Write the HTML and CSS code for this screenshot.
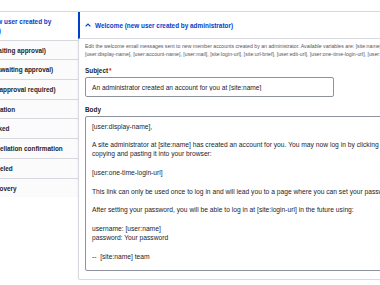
FILE: index.html
```html
<!DOCTYPE html>
<html lang="en">
<head>
    <meta charset="UTF-8">
    <meta name="viewport" content="width=device-width, initial-scale=1.0">
    <title>Account settings - Emails</title>
    <link rel="stylesheet" href="styles.css">
</head>
<body>
    <div class="vertical-tabs">
        <ul class="tabs-menu">
            <li class="tabs-item is-selected">Welcome (new user created by administrator)</li>
            <li class="tabs-item">Welcome (awaiting approval)</li>
            <li class="tabs-item">Admin (user awaiting approval)</li>
            <li class="tabs-item">Welcome (no approval required)</li>
            <li class="tabs-item">Account activation</li>
            <li class="tabs-item">Account blocked</li>
            <li class="tabs-item">Account cancellation confirmation</li>
            <li class="tabs-item">Account canceled</li>
            <li class="tabs-item">Password recovery</li>
        </ul>

        <div class="tabs-pane">
            <div class="pane-summary">
                <svg class="chevron" width="6" height="4" viewBox="0 0 6 4">
                    <polyline points="0.6,3.4 3,1 5.4,3.4" fill="none" stroke="#003ecc" stroke-width="1.2"/>
                </svg>
                <span>Welcome (new user created by administrator)</span>
            </div>

            <div class="pane-body">
                <div class="description">
                    Edit the welcome email messages sent to new member accounts created by an administrator. Available variables are: [site:name], [site:url],<br>
                    [user:display-name], [user:account-name], [user:mail], [site:login-url], [site:url-brief], [user:edit-url], [user:one-time-login-url], [user:cancel-url].
                </div>

                <div class="form-item">
                    <label for="subject">Subject<span class="required">*</span></label>
                    <input type="text" id="subject" class="form-text" value="An administrator created an account for you at [site:name]">
                </div>

                <div class="form-item">
                    <label for="body">Body</label>
                    <textarea id="body" class="form-textarea" wrap="off">[user:display-name],

A site administrator at [site:name] has created an account for you. You may now log in by clicking this link or
copying and pasting it into your browser:

[user:one-time-login-url]

This link can only be used once to log in and will lead you to a page where you can set your password.

After setting your password, you will be able to log in at [site:login-url] in the future using:

username: [user:name]
password: Your password

--  [site:name] team</textarea>
                </div>
            </div>
        </div>
    </div>
</body>
</html>
```

FILE: styles.css
```css
body {
    margin: 0;
    padding: 0;
    font-family: "Liberation Sans", Arial, sans-serif;
    color: #232429;
    background-color: #fff;
    overflow: hidden;
}

.vertical-tabs {
    display: flex;
    align-items: flex-start;
    margin-top: 11px;
    margin-left: -50px;
    width: 640px;
}

/* menu on the left, mostly scrolled out of view */
.tabs-menu {
    list-style: none;
    margin: 0;
    padding: 0;
    width: 128px;
    flex: none;
    border-top: 1px solid #d8d9de;
}

.tabs-item {
    padding: 5px 8px 4.7px;
    border-bottom: 1px solid #d8d9de;
    font-size: 6.4px;
    line-height: 9px;
    font-weight: bold;
    color: #232429;
    background-color: #fbfbfc;
}

.tabs-item:last-child {
    border-bottom: none;
}

.tabs-item.is-selected {
    color: #003ecc;
    background-color: #fff;
}

.tabs-pane {
    flex: 1;
    border: 1px solid #d8d9de;
    border-radius: 0 0 2px 2px;
    background-color: #fff;
    box-shadow: 0 1px 2px rgba(0, 0, 0, 0.08);
}

.pane-summary {
    display: flex;
    align-items: center;
    margin-left: -1px;
    padding: 8.5px 0 8.5px 5px;
    border-left: 2px solid #003ecc;
    border-bottom: 1px solid #d8d9de;
    font-size: 6.4px;
    line-height: 9px;
    font-weight: bold;
    color: #003ecc;
}

.chevron {
    margin-right: 4px;
}

.pane-body {
    padding: 3px 0 8px 6px;
}

.description {
    font-size: 5.2px;
    line-height: 8px;
    color: #55565b;
    white-space: nowrap;
}

.form-item label {
    display: block;
    margin-top: 8px;
    margin-bottom: 2px;
    font-size: 6.4px;
    line-height: 9px;
    font-weight: bold;
}

.required {
    color: #d72222;
    margin-left: 1px;
}

.form-text {
    display: block;
    width: 249px;
    height: 20px;
    margin: 0;
    padding: 0 6px;
    border: 1px solid #8e929c;
    border-radius: 2px;
    box-sizing: border-box;
    font-family: inherit;
    font-size: 6.6px;
    color: #232429;
}

.form-textarea {
    display: block;
    width: 560px;
    height: 155px;
    margin: 0;
    padding: 4.5px 6px;
    border: 1px solid #8e929c;
    border-radius: 2px;
    box-sizing: border-box;
    font-family: inherit;
    font-size: 6.7px;
    line-height: 9.3px;
    color: #232429;
    overflow: hidden;
    resize: none;
}
```
